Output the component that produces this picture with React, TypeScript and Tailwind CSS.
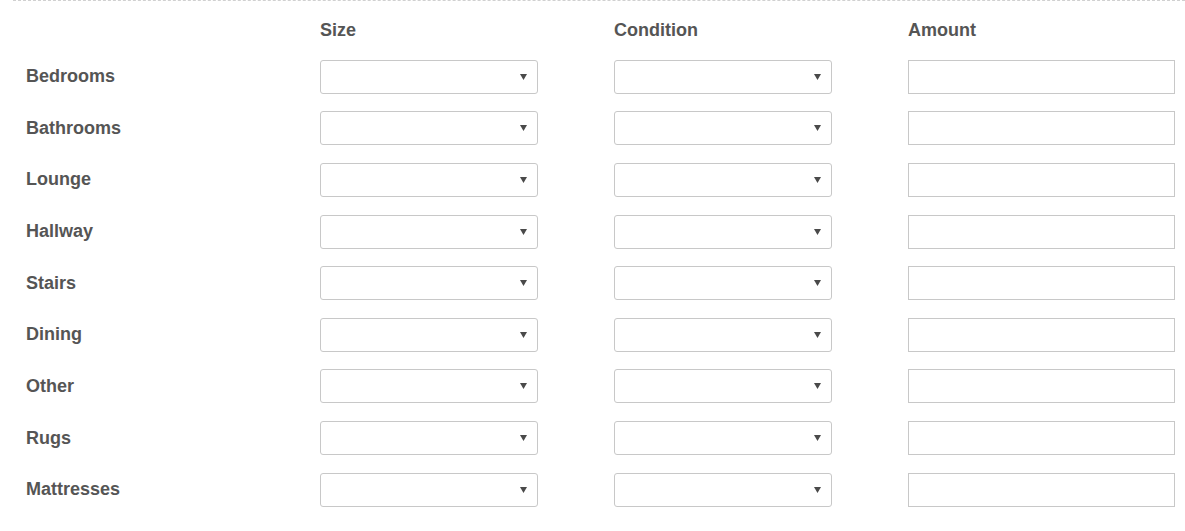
import React from "react";

const rows = ["Bedrooms", "Bathrooms", "Lounge", "Hallway", "Stairs", "Dining", "Other", "Rugs", "Mattresses"];

function Select() {
  return (
    <div className="relative h-[34px] w-[218px]">
      <select className="h-full w-full appearance-none rounded-[3px] border border-[#c8c8c8] bg-white outline-none" defaultValue="">
        <option value=""></option>
      </select>
      <svg className="pointer-events-none absolute right-[11px] top-[14px]" width="7" height="6" viewBox="0 0 7 6">
        <path d="M0 0 H7 L3.5 6 Z" fill="#4a4a4a" />
      </svg>
    </div>
  );
}

export default function App() {
  return (
    <div className="min-h-[531px] w-[1185px] bg-white" style={{ fontFamily: '"Liberation Sans", Arial, sans-serif' }}>
      <div className="ml-[13px] border-t border-dashed border-[#d0d0d0] pl-[13px] pt-[17px]">
        <div className="grid grid-cols-[218px_218px_218px_267px] grid-rows-[24px_repeat(9,34px)] gap-x-[76px] gap-y-[17.625px] text-[18px] font-bold text-[#555555]">
          <div />
          <div className="flex items-center">Size</div>
          <div className="flex items-center">Condition</div>
          <div className="flex items-center">Amount</div>
          {rows.map((r) => (
            <React.Fragment key={r}>
              <div className="flex items-center">{r}</div>
              <Select />
              <Select />
              <input className="h-[34px] w-[267px] border border-[#c8c8c8] bg-white outline-none" />
            </React.Fragment>
          ))}
        </div>
      </div>
    </div>
  );
}
